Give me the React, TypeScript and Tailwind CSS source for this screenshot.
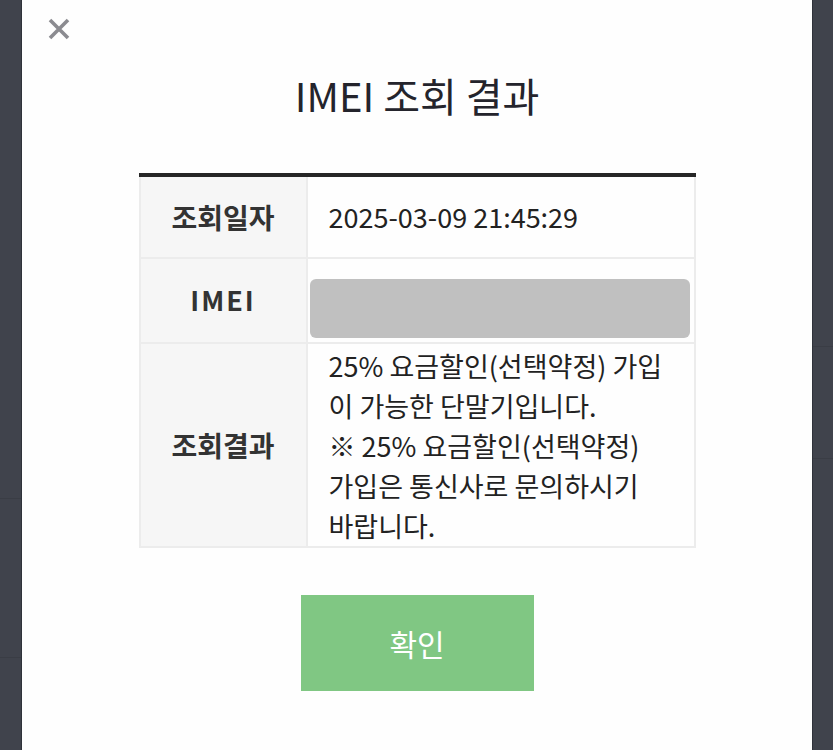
import React from "react";

export default function App() {
  const font = { fontFamily: '"Noto Sans CJK KR", "Noto Sans", sans-serif' };
  return (
    <div className="flex h-[750px] w-[833px] overflow-hidden bg-[#40434c]" style={font}>
      <div className="flex w-[21px] flex-col">
        <div className="h-[499px] border-b border-[#3a3d45]" />
        <div className="h-[159px] border-b border-[#3a3d45]" />
      </div>
      <div className="flex w-[792px] flex-col border-x border-[#2f323a] bg-[#fefefe]">
        <div className="flex h-[56px] items-start pl-[25px] pt-[17px]">
          <svg width="24" height="24" viewBox="0 0 24 24">
            <path d="M3 3 L21 21 M21 3 L3 21" stroke="#8b8b90" strokeWidth="3.6" strokeLinecap="butt" />
          </svg>
        </div>
        <h1 className="text-center text-[40px] leading-[78px] text-[#24242c]">IMEI 조회 결과</h1>
        <div className="mx-auto mt-[39px] w-[557px] border-t-4 border-[#262626]">
          <div className="grid grid-cols-[167px_1fr] border-x-2 border-b-2 border-[#ececec]">
            <div className="flex h-[82px] items-center justify-center border-r-2 border-b-2 border-[#ececec] bg-[#f6f6f6] text-[28px] font-bold text-[#333]">
              조회일자
            </div>
            <div className="flex h-[82px] items-center border-b-2 border-[#ececec] pl-[21px] text-[27px] text-[#222]">
              2025-03-09 21:45:29
            </div>
            <div className="flex h-[85px] items-center justify-center border-r-2 border-b-2 border-[#ececec] bg-[#f6f6f6] text-[27px] font-bold tracking-[2px] text-[#333]">
              IMEI
            </div>
            <div className="h-[85px] border-b-2 border-[#ececec] pl-[2px] pr-[4px] pt-[20px]">
              <div className="h-[59px] w-full rounded-[6px] bg-[#c0c0c0]" />
            </div>
            <div className="flex h-[202px] items-center justify-center border-r-2 border-[#ececec] bg-[#f6f6f6] text-[28px] font-bold text-[#333]">
              조회결과
            </div>
            <div className="h-[202px] pl-[21px] pr-[26px] pt-[2px] text-[27px] leading-[40px] text-[#222]">
              <p>25% 요금할인(선택약정) 가입이 가능한 단말기입니다.</p>
              <p>※ 25% 요금할인(선택약정) 가입은 통신사로 문의하시기 바랍니다.</p>
            </div>
          </div>
        </div>
        <div className="mt-[47px] flex justify-center">
          <button className="h-[96px] w-[233px] bg-[#80c783] text-[30px] text-white">확인</button>
        </div>
      </div>
      <div className="flex flex-1 flex-col">
        <div className="h-[347px] border-b border-[#3a3d45]" />
        <div className="h-[112px] border-b border-[#3a3d45]" />
      </div>
    </div>
  );
}
